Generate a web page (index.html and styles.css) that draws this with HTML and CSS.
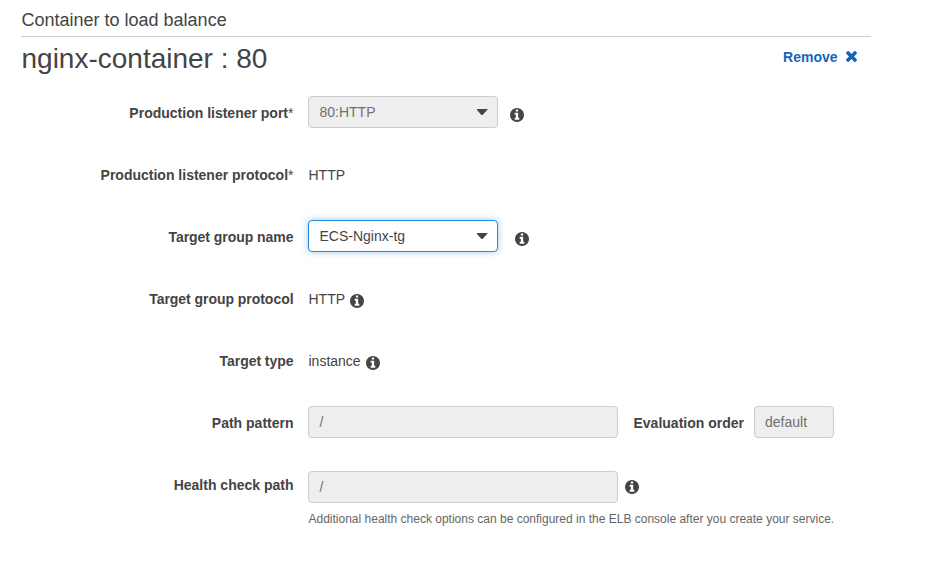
FILE: index.html
```html
<!DOCTYPE html>
<html lang="en">
<head>
<meta charset="utf-8">
<title>Container to load balance</title>
<link rel="stylesheet" href="styles.css">
</head>
<body>
<svg class="defs" aria-hidden="true">
  <symbol id="info" viewBox="128 128 1536 1536"><path d="M1152 1376v-160q0-14-9-23t-23-9h-96v-512q0-14-9-23t-23-9h-320q-14 0-23 9t-9 23v160q0 14 9 23t23 9h96v320h-96q-14 0-23 9t-9 23v160q0 14 9 23t23 9h448q14 0 23-9t9-23zm-128-896v-160q0-14-9-23t-23-9h-192q-14 0-23 9t-9 23v160q0 14 9 23t23 9h192q14 0 23-9t9-23zm640 416q0 209-103 385.5t-279.5 279.5-385.5 103-385.5-103-279.5-279.5-103-385.5 103-385.5 279.5-279.5 385.5-103 385.5 103 279.5 279.5 103 385.5z"/></symbol>
  <symbol id="times" viewBox="302 366 1188 1188"><path d="M1490 1322q0 40-28 68l-136 136q-28 28-68 28t-68-28l-294-294-294 294q-28 28-68 28t-68-28l-136-136q-28-28-28-68t28-68l294-294-294-294q-28-28-28-68t28-68l136-136q28-28 68-28t68 28l294 294 294-294q28-28 68-28t68 28l136 136q28 28 28 68t-28 68l-294 294 294 294q28 28 28 68z"/></symbol>
</svg>
<main class="panel">
  <h2 class="section-title"><span>Container to load balance</span></h2>
  <header class="container-head">
    <h1 class="container-name">nginx-container : 80</h1>
    <a class="remove"><span>Remove</span><svg class="remove-icon"><use href="#times"/></svg></a>
  </header>
  <div class="form">
    <div class="row">
      <div class="label">Production listener port<span class="req">*</span></div>
      <div class="select disabled"><span>80:HTTP</span><i class="caret"></i></div>
      <svg class="info gap-l"><use href="#info"/></svg>
    </div>
    <div class="row">
      <div class="label">Production listener protocol<span class="req">*</span></div>
      <div class="value">HTTP</div>
    </div>
    <div class="row">
      <div class="label tight">Target group name</div>
      <div class="select focused"><span>ECS-Nginx-tg</span><i class="caret"></i></div>
      <svg class="info gap-xl"><use href="#info"/></svg>
    </div>
    <div class="row">
      <div class="label tight">Target group protocol</div>
      <div class="value">HTTP</div>
      <svg class="info"><use href="#info"/></svg>
    </div>
    <div class="row">
      <div class="label tight">Target type</div>
      <div class="value">instance</div>
      <svg class="info"><use href="#info"/></svg>
    </div>
    <div class="row">
      <div class="label">Path pattern</div>
      <div class="input wide">/</div>
      <div class="label inline">Evaluation order</div>
      <div class="input small">default</div>
    </div>
    <div class="row health">
      <div class="label">Health check path</div>
      <div class="field">
        <div class="line">
          <div class="input wide">/</div>
          <svg class="info gap-m"><use href="#info"/></svg>
        </div>
        <p class="hint">Additional health check options can be configured in the ELB console after you create your service.</p>
      </div>
    </div>
  </div>
</main>
</body>
</html>
```
FILE: styles.css
```css
* { box-sizing: border-box; }
body {
  margin: 0;
  background: #fff;
  color: #444;
  font: 14px/20px "Liberation Sans", Arial, sans-serif;
}
.defs { display: none; }
.panel { width: 850px; margin-left: 21px; }
.section-title {
  height: 37px;
  margin: 0;
  padding: 9px 0 0 .5px;
  border-bottom: 1px solid #ccc;
  font-size: 18px;
  font-weight: 400;
  line-height: 22px;
}
.container-head {
  display: flex;
  justify-content: space-between;
  height: 59px;
  padding: 0 14.5px 0 .5px;
}
.container-name {
  margin: 5px 0 0;
  font-size: 28px;
  font-weight: 400;
  line-height: 34px;
}
.remove {
  display: flex;
  align-items: center;
  gap: 8px;
  height: 20px;
  margin-top: 10px;
  color: #1166bb;
  font-weight: 700;
}
.remove-icon { width: 11px; height: 11px; margin-bottom: 1px; fill: currentColor; }
.row { display: flex; height: 32px; margin-bottom: 30px; }
.label {
  width: 272.5px;
  margin-right: 14.5px;
  padding-top: 7px;
  font-weight: 700;
  text-align: right;
  white-space: nowrap;
}
.label.tight { letter-spacing: -.04px; }
.label.inline { width: 110.5px; margin: 0 10px 0 15.5px; text-align: left; }
.req { font-weight: 400; }
.value { padding: 7px 0 0 .5px; }
.select, .input {
  height: 32px;
  padding: 0 10px 0 10.5px;
  border: 1px solid #ccc;
  border-radius: 4px;
  background: #eee;
  color: #707070;
  line-height: 30px;
}
.select {
  display: flex;
  align-items: center;
  justify-content: space-between;
  width: 190px;
  padding-right: 9.5px;
}
.select.focused {
  border-color: #2a84dc;
  background: #fff;
  color: #444;
  box-shadow: 0 0 7px rgba(42, 132, 220, .45);
}
.caret {
  width: 11px;
  height: 6px;
  background: #444;
  clip-path: polygon(0 0, 100% 0, 100% 10%, 55% 100%, 45% 100%, 0 10%);
}
.input.wide { width: 310px; }
.input.small { width: 80px; padding-left: 10px; }
.info {
  flex: none;
  width: 14px;
  height: 14px;
  margin: 12px 0 0 5px;
  fill: #444;
}
.info.gap-l { margin-left: 12px; }
.info.gap-xl { margin-left: 17px; }
.info.gap-m { margin: 9px 0 0 7px; }
.field { margin-top: 3px; }
.line { display: flex; }
.hint {
  margin: 6px 0 0 .5px;
  color: #666;
  font-size: 12px;
  white-space: nowrap;
}
```
